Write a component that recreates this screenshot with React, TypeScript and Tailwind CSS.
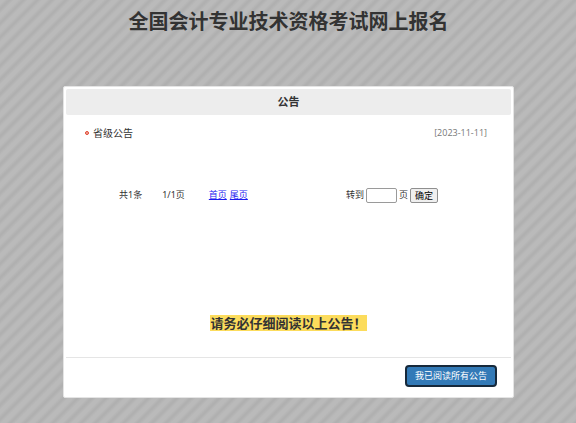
import React from 'react';

interface Notice {
  title: string;
  date: string;
}

const notices: Notice[] = [{ title: '省级公告', date: '[2023-11-11]' }];

function NoticeList() {
  return (
    <ul>
      {notices.map((item) => (
        <li key={item.title} className="flex items-center pl-[19px] pr-6">
          <span className="mr-1 h-1 w-1 rounded-full border border-[#e0442f] bg-[#f3b3a6]" />
          <a href="#notice" className="text-[10px] leading-4 text-[#333]">{item.title}</a>
          <span className="ml-auto font-['Open_Sans'] text-[9px] leading-4 text-[#777]">{item.date}</span>
        </li>
      ))}
    </ul>
  );
}

function Pager() {
  return (
    <form
      className="mt-[46px] flex items-center pl-[53px] pr-[73px] text-[9px] leading-4 text-[#333]"
      onSubmit={(e) => e.preventDefault()}
    >
      <span>共1条</span>
      <span className="ml-5">1/1页</span>
      <span className="ml-6 flex gap-[3px] text-[#1c1cf0]">
        <a href="#first" className="underline">首页</a>
        <a href="#last" className="underline">尾页</a>
      </span>
      <label htmlFor="page" className="ml-auto">转到</label>
      <input id="page" type="text" className="ml-[2px] h-[15px] w-[31px] rounded-xs border border-[#9a9a9a] bg-white px-1" />
      <span className="ml-[2px]">页</span>
      <button type="submit" className="ml-[2px] h-[15px] rounded-xs border border-[#8f8f8f] bg-[#efefef] px-1 leading-[13px] text-black">
        确定
      </button>
    </form>
  );
}

export default function App() {
  return (
    <div className="min-h-screen bg-[repeating-linear-gradient(135deg,#bababa_0px,#bababa_3px,#b0b0b0_6px,#b0b0b0_7px,#bababa_10px)] pr-[62px] pb-6 pl-[63px] font-['Noto_Sans','Noto_Sans_CJK_SC',sans-serif]">
      <h1 className="pt-2 text-center text-[20px] leading-7 font-bold text-[#333]">
        全国会计专业技术资格考试网上报名
      </h1>

      <main className="mt-[50px] rounded-xs border border-[#e4e4e4] bg-white p-[2px]">
        <h2 className="rounded-xs bg-[#ededed] text-center text-[11px] leading-[26px] font-bold text-[#333]">公告</h2>
        <div className="pt-[10px]">
          <NoticeList />
          <Pager />
        </div>

        <p className="mt-[112px] text-center text-[13px] leading-4 font-bold text-[#333]">
          <mark className="inline-block bg-[#fcdc5c] text-[#333]">请务必仔细阅读以上公告！</mark>
        </p>

        <footer className="mt-[26px] flex justify-end border-t border-[#e5e5e5] pt-[7px] pr-[14px] pb-2">
          <button type="button" className="h-[22px] rounded-sm border-2 border-[#16293b] bg-[#337ab7] px-2 text-[9px] leading-4 text-white">
            我已阅读所有公告
          </button>
        </footer>
      </main>
    </div>
  );
}
